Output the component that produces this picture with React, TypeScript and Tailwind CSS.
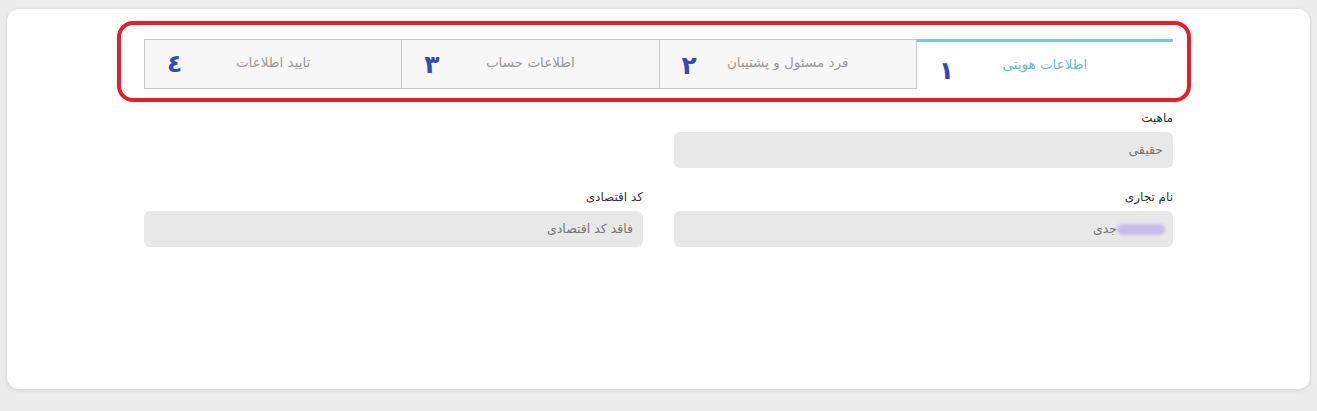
import React from 'react'

const tabs = [
  { num: '١', label: 'اطلاعات هویتی', active: true, top: 'top-[16px]' },
  { num: '٢', label: 'فرد مسئول و پشتیبان', active: false, top: 'top-[13px]' },
  { num: '٣', label: 'اطلاعات حساب', active: false, top: 'top-[12px]' },
  { num: '٤', label: 'تایید اطلاعات', active: false, top: 'top-[11px]' },
]

function Field({ label, value, blurred }: { label: string; value: string; blurred?: boolean }) {
  return (
    <div className="flex flex-col">
      <label className="text-[12px] text-[#333] leading-4 mb-[6px]">{label}</label>
      <div className="h-[36px] rounded-md bg-[#e8e8e8] flex items-center px-2.5 text-[12.5px] text-[#777]">
        {blurred && <span className="inline-block w-[48px] h-[11px] -mr-[2px] rounded-full bg-[#c6bdea] blur-[1.5px]" />}
        <span>{value}</span>
      </div>
    </div>
  )
}

export default function App() {
  return (
    <div dir="rtl" className="min-h-[411px] bg-[#ececec] pt-[9px] px-[7px] pb-[21px] font-['DejaVu_Sans',sans-serif]">
      <div className="bg-white rounded-xl shadow-[0_1px_4px_rgba(0,0,0,0.12)] h-[380px] pt-[30px]">
        <div className="w-[1029px] mx-auto">
          {/* Tabs */}
          <div className="relative">
            <div className="grid grid-cols-4 h-[50px]">
              {tabs.map((t) => (
                <div
                  key={t.num}
                  className={
                    t.active
                      ? 'relative flex items-center justify-center bg-white border-t-[3px] border-t-[#7cc9ce] border-l border-l-[#c9c9c9] border-r-0'
                      : 'relative flex items-center justify-center bg-[#f7f7f7] border border-[#c9c9c9] border-r-0'
                  }
                >
                  <span className={t.active ? 'text-[13.5px] text-[#67bcc3] -mt-[3px]' : 'text-[13.5px] text-[#9a9a9a] -mt-[3px]'}>
                    {t.label}
                  </span>
                  <span className={`absolute left-[22px] ${t.top} text-[25px] font-semibold text-[#3a47b4] leading-none`}>
                    {t.num}
                  </span>
                </div>
              ))}
            </div>
            {/* highlight annotation */}
            <div className="absolute -left-[27px] -right-[18px] -top-[18px] -bottom-[13px] border-[4px] border-[#e3202a] rounded-[16px] pointer-events-none" />
          </div>

          {/* Form */}
          <div className="grid grid-cols-2 gap-x-[31px] gap-y-[21px] mt-[21px]">
            <Field label="ماهیت" value="حقیقی" />
            <div />
            <Field label="نام تجاری" value="جدی" blurred />
            <Field label="کد اقتصادی" value="فاقد کد اقتصادی" />
          </div>
        </div>
      </div>
    </div>
  )
}
